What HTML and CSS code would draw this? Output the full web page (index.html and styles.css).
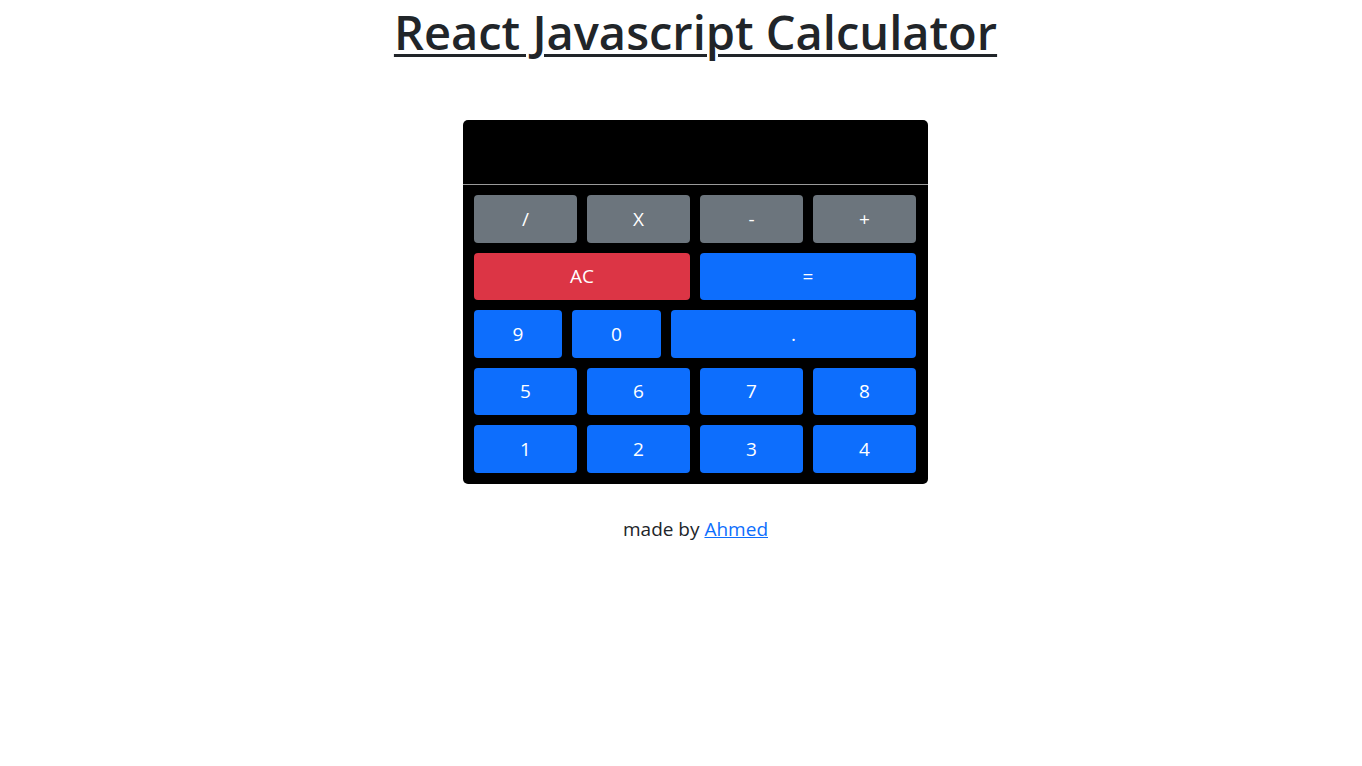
FILE: index.html
```html
<!DOCTYPE html>
<html lang="en">
<head>
<meta charset="utf-8">
<title>React Javascript Calculator</title>
<link rel="stylesheet" href="styles.css">
</head>
<body>
<main class="page">
  <h1 class="title">React Javascript Calculator</h1>
  <div class="calculator">
    <div class="display"></div>
    <div class="keys">
      <div class="row row-4">
        <button class="btn btn-gray">/</button>
        <button class="btn btn-gray">X</button>
        <button class="btn btn-gray">-</button>
        <button class="btn btn-gray">+</button>
      </div>
      <div class="row row-2">
        <button class="btn btn-red">AC</button>
        <button class="btn btn-blue">=</button>
      </div>
      <div class="row row-3">
        <button class="btn btn-blue">9</button>
        <button class="btn btn-blue">0</button>
        <button class="btn btn-blue">.</button>
      </div>
      <div class="row row-4">
        <button class="btn btn-blue">5</button>
        <button class="btn btn-blue">6</button>
        <button class="btn btn-blue">7</button>
        <button class="btn btn-blue">8</button>
      </div>
      <div class="row row-4">
        <button class="btn btn-blue">1</button>
        <button class="btn btn-blue">2</button>
        <button class="btn btn-blue">3</button>
        <button class="btn btn-blue">4</button>
      </div>
    </div>
  </div>
  <p class="credit">made by <a href="#">Ahmed</a></p>
</main>
</body>
</html>
```
FILE: styles.css
```css
* { box-sizing: border-box; }
html, body { margin: 0; padding: 0; background: #fff; }
body {
  font-family: "Open Sans", "Noto Sans", sans-serif;
  color: #212529;
}
.page {
  display: flex;
  flex-direction: column;
  align-items: center;
  padding-left: 29px;
}
.title {
  margin: 0 0 56px;
  font-size: 47px;
  line-height: 64px;
  font-weight: 600;
  text-decoration: underline;
  text-decoration-thickness: 3px;
  text-underline-offset: 4px;
}
.calculator {
  width: 465px;
  background: #000;
  border-radius: 5px;
}
.display {
  height: 65px;
  border-bottom: 1px solid #9a9a9a;
}
.keys {
  padding: 10px 12px 11px 11px;
  display: flex;
  flex-direction: column;
  gap: 10px;
}
.row { display: grid; gap: 10px; }
.row-4 { grid-template-columns: repeat(4, 1fr); }
.row-2 { grid-template-columns: 1fr 1fr; }
.row-3 { grid-template-columns: 88px 89px 1fr; }
.btn {
  height: 47.5px;
  border: 0;
  border-radius: 4px;
  color: #fff;
  font-family: inherit;
  font-size: 19px;
  padding: 0;
}
.btn-gray { background: #6c757d; }
.btn-red { background: #dc3545; }
.btn-blue { background: #0d6efd; }
.credit {
  margin: 31px 0 0;
  font-size: 19px;
  line-height: 28px;
}
.credit a { color: #0d6efd; }
```
